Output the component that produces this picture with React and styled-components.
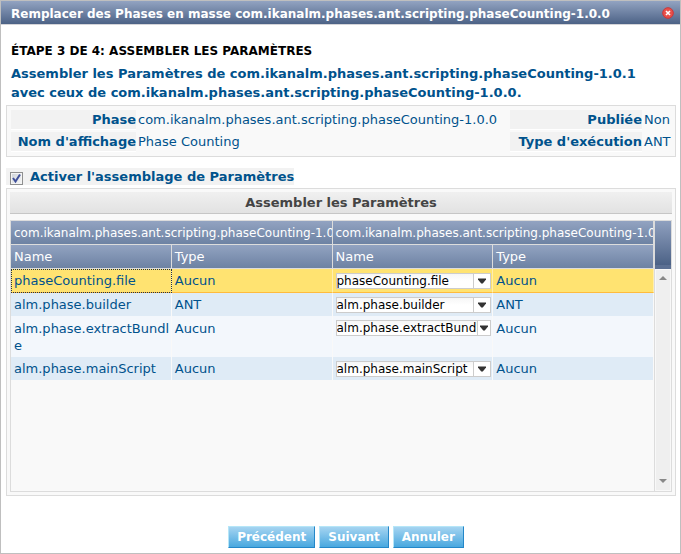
import React, { useState } from "react";
import styled, { createGlobalStyle } from "styled-components";

const GlobalStyle = createGlobalStyle`
  *, *::before, *::after { box-sizing: border-box; }
  html, body, #root { height: 100%; }
  body {
    margin: 0;
    background: #fff;
    color: #00528c;
    font: 13px/18px Verdana, "DejaVu Sans", sans-serif;
  }
`;

const Dialog = styled.main`
  display: flex;
  flex-direction: column;
  min-height: 100%;
  border: 1px solid #bfbfbf;
`;

const TitleBar = styled.header`
  display: flex;
  align-items: center;
  justify-content: space-between;
  height: 24px;
  padding: 2px 6px 0 10px;
  border-bottom: 1px solid #d4d4d8;
  background: linear-gradient(#92a3c1, #4c6286);
  color: #fff;
`;

const Title = styled.h1`
  margin: 0;
  font-size: 12px;
  line-height: 18px;
  white-space: nowrap;
`;

const CloseButton = styled.button`
  display: flex;
  padding: 0 0 2px;
  border: 0;
  background: none;
  cursor: pointer;
`;

const Content = styled.div`
  display: flex;
  flex: 1;
  flex-direction: column;
  padding: 17px 4px 5px 5px;
`;

const Step = styled.h2`
  margin: 0 5px;
  color: #000;
  font-size: 12px;
  line-height: 18px;
  text-transform: uppercase;
`;

const Summary = styled.h3`
  margin: 4px 5px 3px;
  font-size: 13px;
  line-height: 19px;
`;

const Details = styled.dl`
  display: grid;
  grid-template-columns: 125px 1fr 132px 27px;
  gap: 2px;
  margin: 0;
  padding: 4px;
  border: 1px solid #dcdcdc;
  background: #f9f9f9;
`;

const Term = styled.dt`
  border-bottom: 1px solid #fff;
  background: #f2f2f2;
  font-weight: bold;
  line-height: 19px;
  text-align: right;
`;

const Value = styled.dd`
  margin: 0;
  line-height: 19px;
`;

const MergeToggle = styled.label`
  display: flex;
  align-items: center;
  align-self: flex-start;
  gap: 7px;
  height: 17px;
  margin: 11px 0 3px;
  padding-left: 4px;
  background: #f2f2f2;
  font-weight: bold;
`;

const TickBox = styled.span`
  display: grid;
  width: 13px;
  height: 13px;
  margin-top: 4px;
  > * { grid-area: 1 / 1; }
  svg { pointer-events: none; }
  input:not(:checked) + svg { visibility: hidden; }
`;

const Tick = styled.input`
  appearance: none;
  width: 13px;
  height: 13px;
  margin: 0;
  border: 1px solid #8e8f8f;
  background: linear-gradient(135deg, #cdd2d8, #f8f8f8);
  box-shadow: inset 0 0 0 1px #f4f4f4;
`;

const MergePanel = styled.section`
  padding: 3px;
  border: 1px solid #dcdcdc;
  background: #f9f9f9;
`;

const PanelTitle = styled.h4`
  height: 22px;
  margin: 0 0 6px;
  border-bottom: 1px solid #c6c6c6;
  background: linear-gradient(#f0f0f0, #e2e2e2);
  color: #444;
  font-size: 13px;
  line-height: 21px;
  text-align: center;
`;

const GridFrame = styled.div`
  display: grid;
  grid-template-columns: minmax(0, 1fr) 17px;
  height: 272px;
  border: 1px solid #dcdcdc;
`;

const Table = styled.table`
  width: 100%;
  align-self: start;
  border-collapse: separate;
  border-spacing: 0;
  table-layout: fixed;
`;

const HeadCell = styled.th`
  height: 24px;
  padding: 0 0 0 3px;
  overflow: hidden;
  border-right: 1px solid #dcdcdc;
  border-bottom: 1px solid #dcdcdc;
  background: linear-gradient(#92a3c1, #6d82a3);
  color: #fff;
  font-size: ${(p) => (p.$group ? 12 : 13)}px;
  font-weight: normal;
  text-align: left;
  white-space: nowrap;
`;

const rowStyles = {
  selected: { colour: "#ffe371", height: 24, pad: 3 },
  even: { colour: "#dfebf6", height: 23, pad: 3 },
  tall: { colour: "#f3f7fc", height: 41, pad: 4 },
};

const Row = styled.tr`
  background: ${(p) => rowStyles[p.$tone].colour};
`;

const Cell = styled.td`
  height: ${(p) => rowStyles[p.$tone].height}px;
  padding: ${(p) => rowStyles[p.$tone].pad}px 1px 2px 3px;
  border-right: 1px solid ${(p) => (p.$tone === "selected" ? "#ffeeb0" : "#f9f9f9")};
  border-bottom: ${(p) => (p.$tone === "selected" ? "1px solid #ffbb3d" : "0")};
  outline: ${(p) => (p.$focused ? "1px dotted #234" : "none")};
  outline-offset: -1px;
  line-height: 17px;
  vertical-align: top;
  word-break: break-all;
`;

const PickerCell = styled(Cell)`
  padding: 4px 1px 0 3px;
`;

const Picker = styled.div`
  display: grid;
  grid-template-columns: minmax(0, 1fr) 17px;
  height: 16px;
  overflow: hidden;
  border: 1px solid #ccc;
  background: linear-gradient(#f6f6f6, #fff 50%);
`;

const PickerArrow = styled.svg`
  grid-area: 1 / 2;
  width: ${(p) => (p.$narrow ? 13 : 17)}px;
  height: 14px;
  justify-self: end;
  border-left: 1px solid #ccc;
  background: #fff;
  pointer-events: none;
`;

const PickerSelect = styled.select`
  grid-area: 1 / 1 / 2 / 3;
  align-self: start;
  appearance: none;
  width: 100%;
  height: 14px;
  margin: 0;
  padding: 0 12px 0 0;
  border: 0;
  background: transparent;
  color: #000;
  font: 12px/14px Verdana, "DejaVu Sans", sans-serif;
`;

const ScrollColumn = styled.div`
  display: flex;
  flex-direction: column;
  border-left: 1px solid #dcdcdc;
`;

const ScrollHead = styled.div`
  height: 48px;
  border-bottom: 4px solid #5c7093;
  background: linear-gradient(#8fa0bf, #4c6286);
`;

const ScrollTrack = styled.div`
  display: flex;
  flex: 1;
  flex-direction: column;
  align-items: center;
  justify-content: space-between;
  border: 1px solid #f8f8f8;
  background: #efefef;
`;

const ScrollButton = styled.button`
  display: flex;
  padding: 6px 3px;
  border: 0;
  background: none;
`;

const Actions = styled.footer`
  display: flex;
  justify-content: center;
  gap: 4px;
  margin-top: auto;
  padding-left: 10px;
`;

const ActionButton = styled.button`
  height: 22px;
  padding: 0 8px;
  border: 1px solid;
  border-color: #b5e6f8 #2487c8 #2487c8 #b5e6f8;
  background: linear-gradient(#a5d4f1, #49a8df);
  color: #fff;
  font: bold 12px/18px Verdana, "DejaVu Sans", sans-serif;
`;

const parameters = [
  { name: "phaseCounting.file", type: "Aucun", tone: "selected" },
  { name: "alm.phase.builder", type: "ANT", tone: "even" },
  { name: "alm.phase.extractBundle", type: "Aucun", tone: "tall" },
  { name: "alm.phase.mainScript", type: "Aucun", tone: "even" },
];

function ParameterRow({ name, type, tone }) {
  const [target, setTarget] = useState(name);
  const narrow = tone === "tall";
  return (
    <Row $tone={tone}>
      <Cell $tone={tone} $focused={tone === "selected"}>{name}</Cell>
      <Cell $tone={tone}>{type}</Cell>
      <PickerCell $tone={tone}>
        <Picker>
          <PickerSelect aria-label={`Name: ${name}`} value={target} onChange={(e) => setTarget(e.target.value)}>
            {parameters.map((p) => <option key={p.name}>{p.name}</option>)}
          </PickerSelect>
          <PickerArrow $narrow={narrow} viewBox={narrow ? "2 0 12 14" : "0 0 16 14"} aria-hidden="true">
            <path d="M4 4.500h8v1L8.800 9.500H7.200L4 5.500z" fill="#333" />
          </PickerArrow>
        </Picker>
      </PickerCell>
      <Cell $tone={tone}>{type}</Cell>
    </Row>
  );
}

export default function App() {
  const [merge, setMerge] = useState(true);
  return (
    <Dialog>
      <GlobalStyle />
      <TitleBar>
        <Title>Remplacer des Phases en masse com.ikanalm.phases.ant.scripting.phaseCounting-1.0.0</Title>
        <CloseButton aria-label="Fermer">
          <svg width="12" height="12" viewBox="0 0 12 12">
            <circle cx="6" cy="6" r="5.300" fill="#e8504a" stroke="#cc3538" />
            <path d="M4 4l4 4m0-4l-4 4" stroke="#fff" strokeWidth="1.600" />
          </svg>
        </CloseButton>
      </TitleBar>
      <Content>
        <Step>Étape 3 de 4: Assembler les Paramètres</Step>
        <Summary>
          Assembler les Paramètres de com.ikanalm.phases.ant.scripting.phaseCounting-1.0.1 avec ceux de
          com.ikanalm.phases.ant.scripting.phaseCounting-1.0.0.
        </Summary>
        <Details>
          <Term>Phase</Term>
          <Value>com.ikanalm.phases.ant.scripting.phaseCounting-1.0.0</Value>
          <Term>Publiée</Term>
          <Value>Non</Value>
          <Term>Nom d'affichage</Term>
          <Value>Phase Counting</Value>
          <Term>Type d'exécution</Term>
          <Value>ANT</Value>
        </Details>
        <MergeToggle>
          <TickBox>
            <Tick type="checkbox" checked={merge} onChange={(e) => setMerge(e.target.checked)} />
            <svg width="13" height="13" viewBox="0 0 13 13" aria-hidden="true">
              <path d="M3 6l2.500 3.500L10 2.500" fill="none" stroke="#40509a" strokeWidth="2" />
            </svg>
          </TickBox>
          Activer l'assemblage de Paramètres
        </MergeToggle>
        <MergePanel>
          <PanelTitle>Assembler les Paramètres</PanelTitle>
          <GridFrame>
            <Table>
              <thead>
                <tr>
                  <HeadCell $group colSpan={2}>com.ikanalm.phases.ant.scripting.phaseCounting-1.0.1</HeadCell>
                  <HeadCell $group colSpan={2}>com.ikanalm.phases.ant.scripting.phaseCounting-1.0.0</HeadCell>
                </tr>
                <tr>
                  <HeadCell>Name</HeadCell>
                  <HeadCell>Type</HeadCell>
                  <HeadCell>Name</HeadCell>
                  <HeadCell>Type</HeadCell>
                </tr>
              </thead>
              <tbody>
                {parameters.map((p) => <ParameterRow key={p.name} {...p} />)}
              </tbody>
            </Table>
            <ScrollColumn>
              <ScrollHead />
              <ScrollTrack>
                <ScrollButton aria-label="Défiler vers le haut">
                  <svg width="8" height="5" viewBox="0 0 8 5"><path d="M4 0l4 4H0z" fill="#888" /></svg>
                </ScrollButton>
                <ScrollButton aria-label="Défiler vers le bas">
                  <svg width="8" height="5" viewBox="0 0 8 5"><path d="M0 0h8L4 4z" fill="#888" /></svg>
                </ScrollButton>
              </ScrollTrack>
            </ScrollColumn>
          </GridFrame>
        </MergePanel>
        <Actions>
          <ActionButton>Précédent</ActionButton>
          <ActionButton>Suivant</ActionButton>
          <ActionButton>Annuler</ActionButton>
        </Actions>
      </Content>
    </Dialog>
  );
}
